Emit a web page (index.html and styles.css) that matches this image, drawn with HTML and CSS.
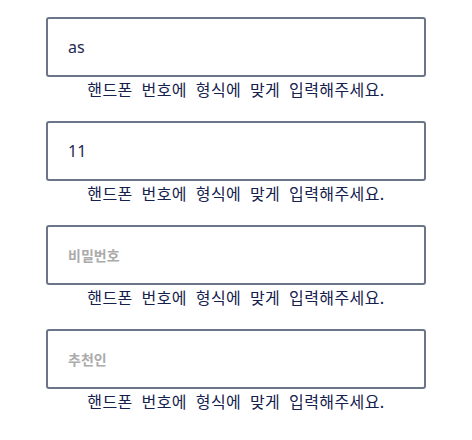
FILE: index.html
```html
<!DOCTYPE html>
<html lang="ko">
<head>
<meta charset="utf-8">
<link rel="stylesheet" href="styles.css">
</head>
<body>
<div class="form">
  <div class="field">
    <input class="input" type="text" value="as">
    <p class="help">핸드폰 번호에 형식에 맞게 입력해주세요.</p>
  </div>
  <div class="field">
    <input class="input" type="text" value="11">
    <p class="help">핸드폰 번호에 형식에 맞게 입력해주세요.</p>
  </div>
  <div class="field">
    <input class="input" type="password" placeholder="비밀번호">
    <p class="help">핸드폰 번호에 형식에 맞게 입력해주세요.</p>
  </div>
  <div class="field">
    <input class="input" type="text" placeholder="추천인">
    <p class="help">핸드폰 번호에 형식에 맞게 입력해주세요.</p>
  </div>
</div>
</body>
</html>
```
FILE: styles.css
```css
html, body {
  margin: 0;
  padding: 0;
  background: #ffffff;
}
body {
  font-family: "Noto Sans", "Noto Sans CJK KR", sans-serif;
}
.form {
  width: 380px;
  margin: 0 auto;
  padding-top: 17px;
  display: flex;
  flex-direction: column;
  gap: 20px;
}
.field {
  display: flex;
  flex-direction: column;
}
.input {
  box-sizing: border-box;
  width: 380px;
  height: 60px;
  border: 2px solid #6b7587;
  border-radius: 3px;
  padding: 0 20px;
  font-family: "Noto Sans", "Noto Sans CJK KR", sans-serif;
  font-size: 16px;
  color: #1f2a52;
  background: #fff;
  outline: none;
}
.input::placeholder {
  color: #ababab;
  font-family: "Noto Sans CJK KR", sans-serif;
  font-size: 14px;
  font-weight: 700;
}
.help {
  margin: 0;
  height: 24px;
  line-height: 24px;
  text-align: center;
  font-family: "Noto Sans CJK KR", sans-serif;
  font-size: 16px;
  font-weight: 400;
  letter-spacing: 0.4px;
  word-spacing: 4px;
  color: #14204d;
}
```
